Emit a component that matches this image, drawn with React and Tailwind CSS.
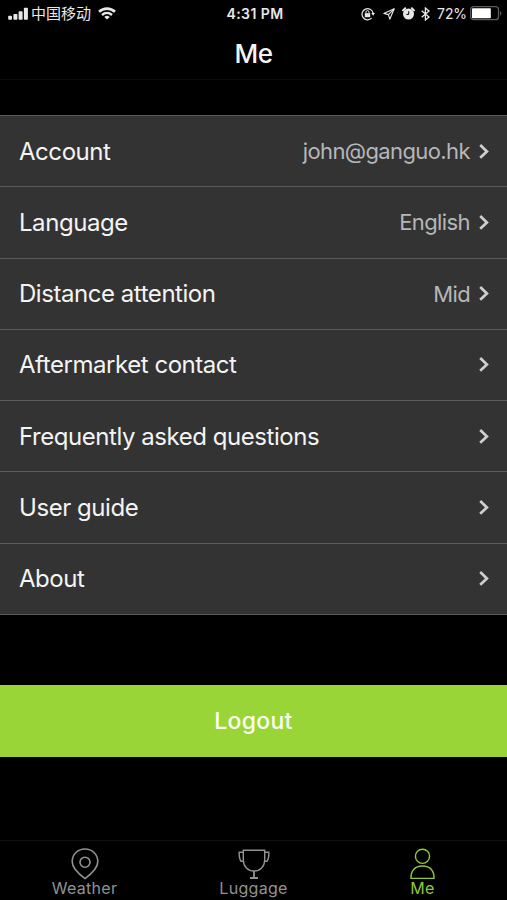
import React, { useState } from 'react';

const items = [
  { label: 'Account', value: 'john@ganguo.hk' },
  { label: 'Language', value: 'English' },
  { label: 'Distance attention', value: 'Mid' },
  { label: 'Aftermarket contact' },
  { label: 'Frequently asked questions' },
  { label: 'User guide' },
  { label: 'About' },
];

const SignalIcon = () => (
  <svg width="21" height="13" viewBox="0 0 21 13" fill="currentColor">
    <rect x="0.2" y="8.8" width="3.8" height="4" rx="0.8" />
    <rect x="5.4" y="7" width="4" height="5.8" rx="0.8" />
    <rect x="10.6" y="4.2" width="4" height="8.6" rx="0.8" />
    <rect x="15.9" y="0.8" width="4" height="12" rx="0.8" />
  </svg>
);

const WifiIcon = () => (
  <svg width="18" height="13" viewBox="0 0 18 13" fill="none" stroke="currentColor">
    <path d="M1 4.8C5.6 0.5 12.4 0.5 17 4.8" strokeWidth="2.6" />
    <path d="M4 8C7 5.3 11 5.3 14 8" strokeWidth="2.4" />
    <path d="M9 12.6L6.3 9.9C7.8 8.5 10.2 8.5 11.7 9.9Z" fill="currentColor" stroke="none" />
  </svg>
);

const RotationLockIcon = () => (
  <svg width="14" height="14" viewBox="0 0 14 14" fill="none" stroke="currentColor">
    <path d="M10.6 11.2A5.6 5.6 0 1 1 12.1 6" strokeWidth="1.2" />
    <path d="M10.2 6H14L12.2 8.8Z" fill="currentColor" stroke="none" />
    <rect x="3.8" y="6.2" width="5.4" height="4" fill="currentColor" stroke="none" />
    <path d="M5 6.6V5.1A1.5 1.5 0 0 1 8 5.1V6.6" strokeWidth="1" />
  </svg>
);

const LocationIcon = () => (
  <svg width="12" height="12" viewBox="0 0 12 12" fill="none" stroke="currentColor" strokeWidth="1.1" strokeLinejoin="round">
    <path d="M11.2 0.8L0.8 5.4L5.4 6.6L6.8 11.2Z" />
    <path d="M11.2 0.8L5.4 6.6" />
  </svg>
);

const AlarmIcon = () => (
  <svg width="13" height="13" viewBox="0 0 13 13" fill="none" stroke="currentColor">
    <circle cx="6.5" cy="7" r="5.5" fill="currentColor" stroke="none" />
    <path d="M1 3.4L3.2 1.3M12 3.4L9.8 1.3" strokeWidth="2" strokeLinecap="round" />
    <path d="M6.7 4.2V7.4H4.4" stroke="#000" strokeWidth="1" />
  </svg>
);

const BluetoothIcon = () => (
  <svg width="9" height="14" viewBox="0 0 9 14" fill="none" stroke="currentColor" strokeWidth="1.3">
    <path d="M0.7 3.8L8 10L4.4 13V1L8 4L0.7 10.2" />
  </svg>
);

const BatteryIcon = () => (
  <svg width="32" height="15" viewBox="0 0 32 15" fill="none">
    <rect x="0.7" y="0.7" width="27.8" height="13" rx="3" stroke="#5c5c5e" strokeWidth="1.3" />
    <rect x="2" y="2.2" width="18.8" height="10" rx="0.8" fill="#fff" />
    <path d="M30 5C31.8 5.8 31.8 9 30 9.8Z" fill="#5c5c5e" />
  </svg>
);

const ChevronIcon = () => (
  <svg width="11" height="16" viewBox="0 0 11 16" fill="none" stroke="#cfcfcf" strokeWidth="2.7">
    <path d="M1.2 1L7.9 7.4L1.2 13.8" />
  </svg>
);

const PinIcon = () => (
  <svg width="30" height="32" viewBox="0 0 30 32" fill="none" stroke="currentColor" strokeWidth="1.6">
    <path d="M15 30.6C10 27 2.2 21 2.2 13.6C2.2 6.2 8 1 15 1C22 1 27.8 6.2 27.8 13.6C27.8 21 20 27 15 30.6Z" />
    <circle cx="15" cy="14.2" r="5" />
  </svg>
);

const TrophyIcon = () => (
  <svg width="32" height="32" viewBox="0 0 32 32" fill="none" stroke="currentColor" strokeWidth="1.4">
    <path d="M5.3 2.2H26.7V12C26.7 18.5 22 23 16 23C10 23 5.3 18.5 5.3 12Z" />
    <path d="M5.3 4.2H1.2C1 8 1.6 11.5 3 13.3H5.4M26.7 4.2H30.8C31 8 30.4 11.5 29 13.3H26.6" />
    <path d="M16 23V30M12 30H20" strokeWidth="1.8" />
  </svg>
);

const UserIcon = () => (
  <svg width="26" height="32" viewBox="0 0 26 32" fill="none" stroke="currentColor" strokeWidth="1.4">
    <circle cx="12.5" cy="8.3" r="7.1" />
    <path d="M1 30.4C0.7 23.2 4.5 18 12.5 18C20.5 18 24.3 23.2 24 30.4Z" />
  </svg>
);

const tabs = [
  { name: 'Weather', Icon: PinIcon },
  { name: 'Luggage', Icon: TrophyIcon },
  { name: 'Me', Icon: UserIcon },
];

const App = () => {
  const [active, setActive] = useState('Me');

  return (
    <div className="w-full h-[900px] flex flex-col bg-black text-[#f4f4f4] font-['Inter','Noto_Sans_CJK_SC',sans-serif] overflow-hidden">
      {/* Status bar */}
      <div className="h-[27px] shrink-0 grid grid-cols-[1fr_auto_1fr] items-center pl-2 pr-[5px] text-[#e8e8e8]">
        <div className="flex items-center">
          <SignalIcon />
          <span className="ml-[2px] text-[15px] leading-5">中国移动</span>
          <span className="ml-[7px]"><WifiIcon /></span>
        </div>
        <span className="text-[14px] font-semibold tracking-[0.45px]">4:31 PM</span>
        <div className="flex items-center justify-end">
          <RotationLockIcon />
          <span className="ml-2"><LocationIcon /></span>
          <span className="ml-[7px]"><AlarmIcon /></span>
          <span className="ml-[6px]"><BluetoothIcon /></span>
          <span className="ml-[7px] text-[14px] tracking-[-0.1px]">72%</span>
          <span className="ml-[3px]"><BatteryIcon /></span>
        </div>
      </div>

      <header className="h-[53px] shrink-0 flex items-center justify-center border-b border-[#0c0c0c]">
        <h1 className="text-[26px] font-medium tracking-[-0.5px]">Me</h1>
      </header>

      <ul className="mt-[35px] shrink-0 bg-[#333] border-b border-[#5a5a5a]">
        {items.map((item) => (
          <li key={item.label} className="h-[71.25px] flex items-center justify-between pt-px pl-[19px] pr-[17px] border-t border-[#5a5a5a]">
            <span className="text-[24px] tracking-[-0.45px]">{item.label}</span>
            <div className="flex items-center gap-[9px]">
              {item.value && <span className="text-[22px] tracking-[-0.6px] text-[#b5b7b9]">{item.value}</span>}
              <ChevronIcon />
            </div>
          </li>
        ))}
      </ul>

      <button className="mt-[70px] h-[72px] shrink-0 bg-[#9ad537] pt-px text-[23px] font-medium tracking-[0.3px] text-[#fbfff0]">
        Logout
      </button>

      {/* Tab bar */}
      <nav className="mt-auto h-[60px] shrink-0 grid grid-cols-3 border-t border-[#111]">
        {tabs.map(({ name, Icon }) => (
          <button
            key={name}
            onClick={() => setActive(name)}
            className={`flex flex-col items-center pt-[7px] ${active === name ? 'text-[#91c836]' : 'text-[#929292]'}`}
          >
            <Icon />
            <span className="-mt-px text-[16px] leading-[18px] tracking-[0.3px]">{name}</span>
          </button>
        ))}
      </nav>
    </div>
  );
};

export default App;
